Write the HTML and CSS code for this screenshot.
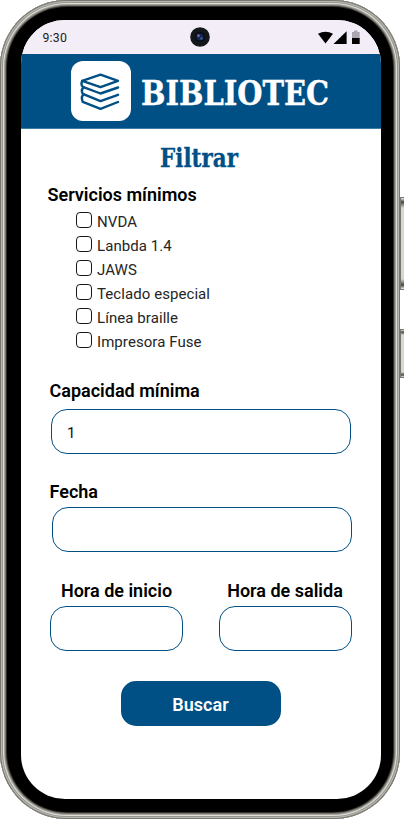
FILE: index.html
```html
<!DOCTYPE html>
<html lang="es">
<head>
<meta charset="utf-8">
<title>Bibliotec</title>
<link rel="stylesheet" href="styles.css">
</head>
<body>
<div class="phone">
  <i class="side-key volume"></i>
  <i class="side-key power"></i>
  <div class="screen">
    <div class="status">
      <span class="clock">9:30</span>
      <svg class="camera" width="20" height="20" viewBox="0 0 20 20"><circle cx="10" cy="10" r="9.8" fill="#15181b"/><circle cx="10" cy="10" r="5" fill="#080b1a"/><circle cx="10" cy="10" r="3.6" fill="#17264b"/><circle cx="8.5" cy="8.7" r="1.4" fill="#6b68a8"/><circle cx="11.4" cy="11.5" r="1.2" fill="#365f94"/></svg>
      <svg class="signals" width="43" height="16" viewBox="0 0 43 16"><path d="M0 2.7Q7.5-1 15 2.7L7.5 12.5Z"/><path d="M15.5 13L28.6.3V13Z"/><path d="M34 1H36V-.5H39.5V1H41.7V7H34Z" fill="#aaa5ae"/><path d="M34 7H41.7V13H34Z"/></svg>
    </div>
    <header class="brand">
      <span class="logo">
        <svg width="40" height="38" viewBox="0 0 40 38" fill="none" stroke="#005085" stroke-width="2.4" stroke-linejoin="round" stroke-linecap="round"><path d="M2.2 7.9L20.5 1.7L38 7.9L20.5 14.2Z"/><path d="M2.2 7.9Q.5 11.5 2.8 13.9L20.5 20.5L38 14.5"/><path d="M3.6 14.4Q.6 17 2.8 20.9L20.5 28.1L38 21.8"/><path d="M3.6 21.4Q.6 24 2.8 28.9L20.5 35.8L38 29"/></svg>
      </span>
      <svg class="name" width="190" height="44" viewBox="0 0 190 44"><text x="0" y="33" textLength="188" lengthAdjust="spacingAndGlyphs">BIBLIOTEC</text></svg>
    </header>
    <main>
      <h1><svg width="82" height="34" viewBox="0 0 82 34"><text x="1" y="27" textLength="78" lengthAdjust="spacingAndGlyphs">Filtrar</text></svg></h1>
      <section class="services">
        <h2>Servicios mínimos</h2>
        <label><i class="box"></i>NVDA</label>
        <label><i class="box"></i>Lanbda 1.4</label>
        <label><i class="box"></i>JAWS</label>
        <label><i class="box"></i>Teclado especial</label>
        <label><i class="box"></i>Línea braille</label>
        <label><i class="box"></i>Impresora Fuse</label>
      </section>
      <section class="field capacity"><h2>Capacidad mínima</h2><div class="input">1</div></section>
      <section class="field date"><h2>Fecha</h2><div class="input"></div></section>
      <section class="hours">
        <div><h2>Hora de inicio</h2><div class="input"></div></div>
        <div><h2>Hora de salida</h2><div class="input"></div></div>
      </section>
      <button>Buscar</button>
    </main>
  </div>
</div>
</body>
</html>
```
FILE: styles.css
```css
* { box-sizing: border-box; }
body { margin: 0; width: 404px; height: 819px; overflow: hidden; background: #fff; font-family: Roboto, sans-serif; }
.phone {
  position: relative; width: 400px; height: 819px; padding: 20px 19.5px 20px 20.5px;
  border-radius: 67px; background: #000;
  box-shadow: inset 0 0 0 1px #77776f, inset 0 0 0 2px #b9b9b3, inset 0 0 0 3px #96968e, inset 0 0 0 4px #deded8, inset 0 0 0 5px #a4a29b, inset 0 0 0 6px #77746d, inset 0 0 0 7px #33312d;
}
.side-key { position: absolute; left: 400px; width: 4px; border: 1px solid #77776f; border-right: 0; background: linear-gradient(#eee 0, #444 4px, #777 6px, #d7d7d2 10px, #d7d7d2 calc(100% - 10px), #777 calc(100% - 6px), #444 calc(100% - 4px), #eee 100%); }
.volume { top: 197px; height: 93px; }
.power { top: 329px; height: 49px; background: linear-gradient(#eee 0, #444 2px, #d7d7d2 5px, #d7d7d2 calc(100% - 5px), #444 calc(100% - 2px), #eee 100%); }
.screen { width: 360px; height: 779px; border-radius: 44px; overflow: hidden; background: #fff; }
.status { display: grid; grid-template-columns: 1fr 20px 1fr; height: 34px; padding: 7px 20px 0 22px; background: #f3edf7; }
.clock { padding-top: 1px; font-size: 12.3px; line-height: 21px; letter-spacing: .2px; color: #1d1b20; }
.camera { margin-left: -1.5px; }
.signals { justify-self: end; margin: 4px 0 0; overflow: visible; }
.brand { display: flex; align-items: flex-start; height: 75px; padding: 7px 0 0 50.5px; background: #005085; border-bottom: 1px solid #3f7ca4; }
.logo { display: flex; justify-content: center; width: 60px; height: 60px; padding: 12px 2px 0 0; border-radius: 12px; background: #fff; }
.name { overflow: visible; margin: 11px 0 0 10px; font: bold 33.5px "Roboto Slab", "DejaVu Serif", serif; fill: #fff; stroke: #fff; stroke-width: .4px; }
main { padding: 14px 27px 0; }
h1 { display: flex; justify-content: center; height: 30px; margin: 0; }
h1 svg { flex: none; overflow: visible; margin: -3px 0 0 -1.5px; font: bold 26px "Roboto Slab", "DejaVu Serif", serif; fill: #005085; stroke: #005085; stroke-width: .3px; }
h2 { margin: 0; font-size: 18px; line-height: 22px; font-weight: 600; color: #000; white-space: nowrap; }
.services { padding-top: 11px; }
.services h2 { margin-bottom: 3px; }
label { display: flex; align-items: flex-start; height: 24px; padding-left: 28.5px; font-size: 15px; line-height: 26px; color: #252525; letter-spacing: .07px; }
.box { width: 16px; height: 16px; margin: 3px 5px 0 0; border: 1.5px solid #171717; border-radius: 4px; }
.input { height: 45px; border: 1px solid #005085; border-radius: 16px; font-size: 15px; line-height: 46px; padding-left: 15px; color: #111; }
.field h2 { margin-left: 2px; }
.capacity { padding-top: 27px; }
.capacity .input { width: 300px; margin: 7px 0 0 3.5px; }
.date { padding-top: 27px; }
.date .input { width: 300px; margin: 4px 0 0 4.5px; }
.hours { display: flex; gap: 35.5px; padding: 28px 0 0 2.5px; }
.hours > div { width: 133px; }
.hours h2 { text-align: center; margin-bottom: 4px; }
button { display: block; width: 160px; height: 45px; margin: 30px 0 0 73px; padding: 2px 0 0; border: 0; border-radius: 15px; background: #005085; color: #fff; font: 600 18px Roboto, sans-serif; }
```
